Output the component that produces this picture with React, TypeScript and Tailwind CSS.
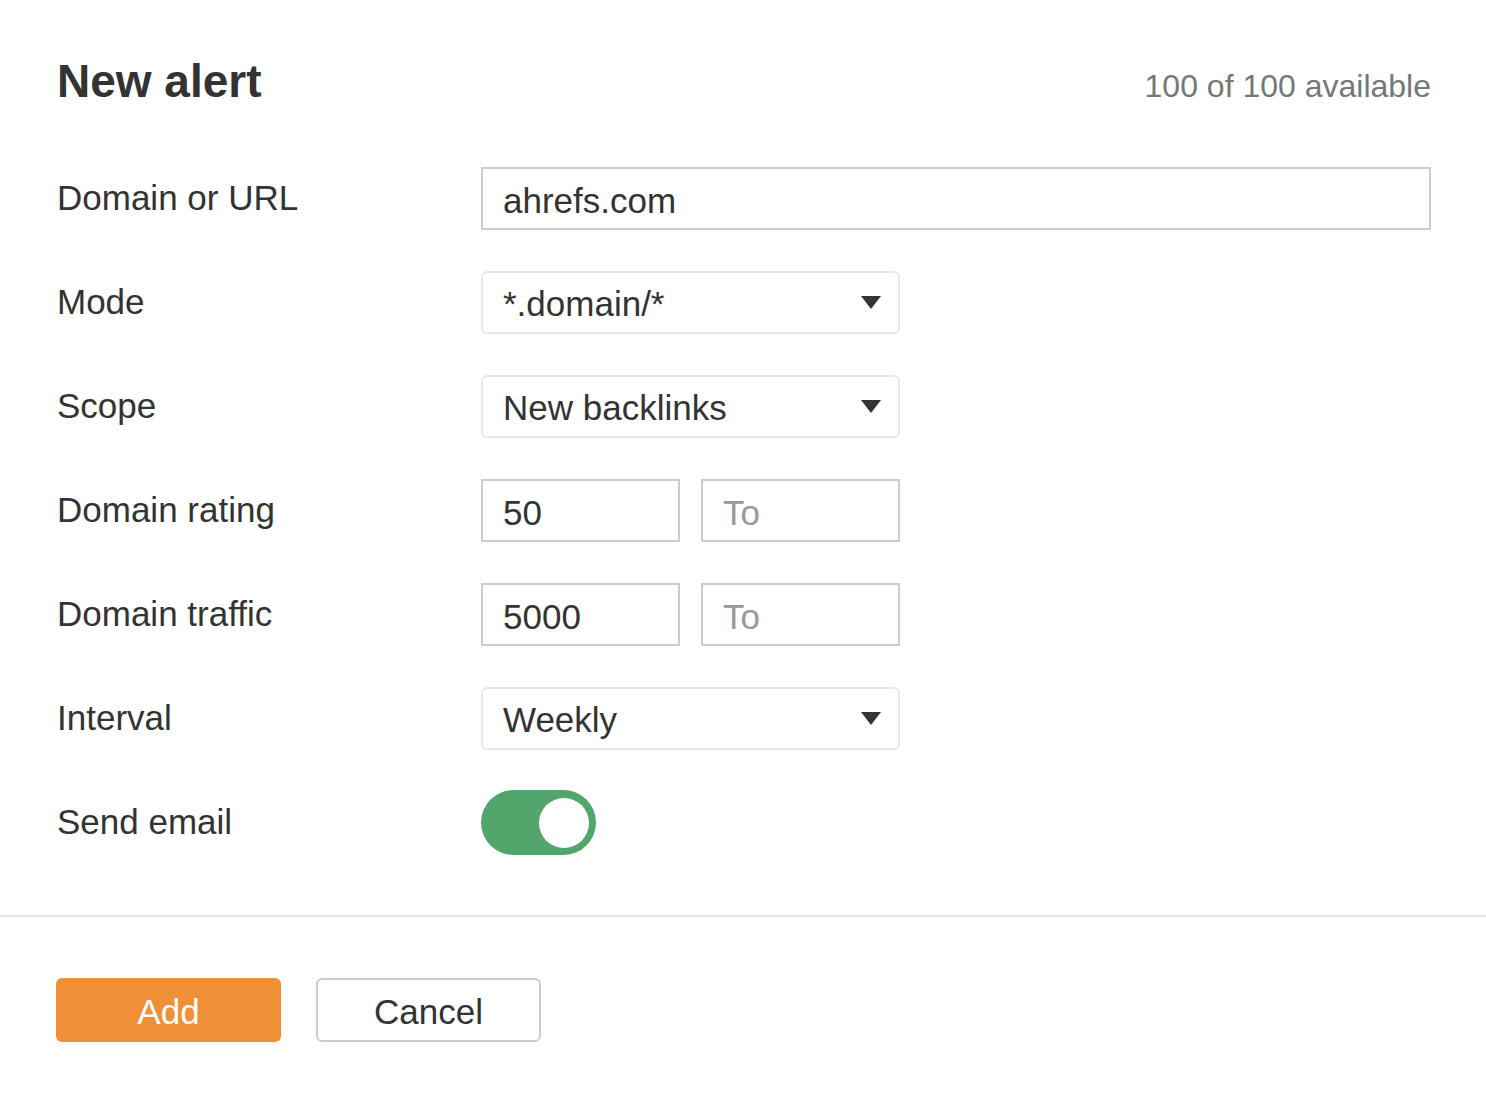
import React, { useState } from "react";

const font = { fontFamily: '"Liberation Sans", Arial, Helvetica, sans-serif' };

const Arrow: React.FC = () => (
  <svg width="20" height="13" viewBox="0 0 20 13" className="shrink-0">
    <path d="M0 0 H20 L10 13 Z" fill="#333333" />
  </svg>
);

const Row: React.FC<{ label: string; children: React.ReactNode }> = ({
  label,
  children,
}) => (
  <div className="flex h-[63px] items-center">
    <div className="w-[424px] shrink-0 text-[35px] text-[#333333]">{label}</div>
    {children}
  </div>
);

const Select: React.FC<{ value: string }> = ({ value }) => (
  <div className="flex h-[63px] w-[419px] items-center justify-between rounded-[6px] border-2 border-[#e8e8e8] bg-white pl-[20px] pr-[17px] text-[35px] text-[#333333]">
    <span className="pt-[4px]">{value}</span>
    <Arrow />
  </div>
);

const Field: React.FC<{ value?: string; placeholder?: string; className?: string }> = ({
  value,
  placeholder,
  className = "",
}) => (
  <div
    className={`flex h-[63px] items-center border-2 border-[#cccccc] bg-white pl-[20px] text-[35px] ${className}`}
  >
    {value ? (
      <span className="pt-[5px] text-[#333333]">{value}</span>
    ) : (
      <span className="pt-[5px] text-[#999999]">{placeholder}</span>
    )}
  </div>
);

const App: React.FC = () => {
  const [sendEmail, setSendEmail] = useState(true);

  return (
    <div className="min-h-screen bg-white" style={font}>
      <div className="pl-[57px] pr-[55px] pt-[58px]">
        <div className="flex items-baseline justify-between">
          <h1 className="text-[46px] font-bold leading-[46px] text-[#333333]">
            New alert
          </h1>
          <span className="text-[32px] text-[#777777]">100 of 100 available</span>
        </div>

        <div className="mt-[57px] flex flex-col gap-[41px]">
          <Row label="Domain or URL">
            <Field value="ahrefs.com" className="flex-1" />
          </Row>
          <Row label="Mode">
            <Select value="*.domain/*" />
          </Row>
          <Row label="Scope">
            <Select value="New backlinks" />
          </Row>
          <Row label="Domain rating">
            <div className="flex gap-[21px]">
              <Field value="50" className="w-[199px]" />
              <Field placeholder="To" className="w-[199px]" />
            </div>
          </Row>
          <Row label="Domain traffic">
            <div className="flex gap-[21px]">
              <Field value="5000" className="w-[199px]" />
              <Field placeholder="To" className="w-[199px]" />
            </div>
          </Row>
          <Row label="Interval">
            <Select value="Weekly" />
          </Row>
          <Row label="Send email">
            <button
              onClick={() => setSendEmail(!sendEmail)}
              className={`relative h-[65px] w-[115px] rounded-full ${
                sendEmail ? "bg-[#53a66b]" : "bg-[#cccccc]"
              }`}
            >
              <span
                className={`absolute top-[8px] h-[50px] w-[50px] rounded-full bg-white ${
                  sendEmail ? "right-[7px]" : "left-[7px]"
                }`}
              />
            </button>
          </Row>
        </div>
      </div>

      <div className="mt-[61px] h-[2px] bg-[#e8e8e8]" />

      <div className="flex gap-[35px] px-[56px] pt-[61px]">
        <button className="h-[64px] w-[225px] rounded-[6px] bg-[#ef8f36] pt-[4px] text-[35px] text-white">
          Add
        </button>
        <button className="h-[64px] w-[225px] rounded-[6px] border-2 border-[#cccccc] bg-white pt-[4px] text-[35px] text-[#333333]">
          Cancel
        </button>
      </div>
    </div>
  );
};

export default App;
